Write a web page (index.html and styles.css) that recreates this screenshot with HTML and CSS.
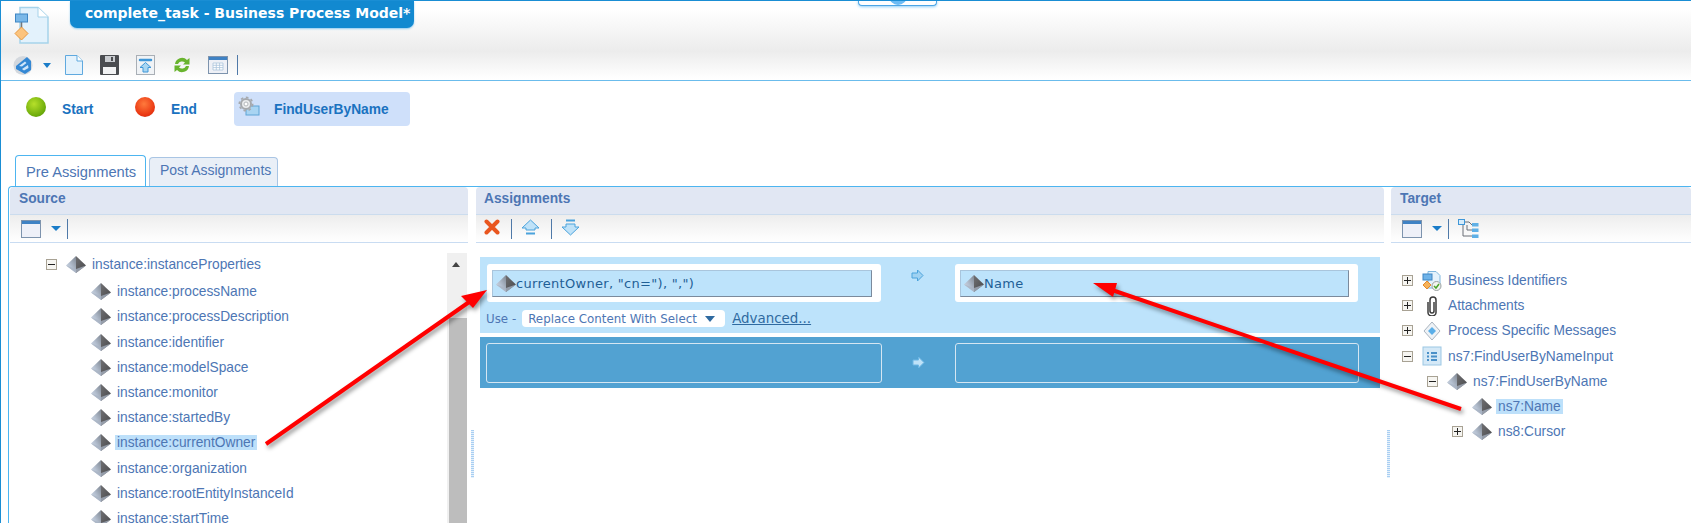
FILE: index.html
```html
<!DOCTYPE html>
<html lang="en">

<head>
    <meta charset="UTF-8">
    <title>complete_task - Business Process Model</title>
    <link rel="stylesheet" href="styles.css">
</head>

<body>
    <!-- shared icons -->
    <svg class="defs" width="0" height="0">
        <defs>
            <linearGradient id="g-pyr-l" x1="1" y1="0" x2="0" y2="1">
                <stop offset="0" stop-color="#7d8590"/>
                <stop offset=".55" stop-color="#b5c0d0"/>
                <stop offset="1" stop-color="#d5deea"/>
            </linearGradient>
            <linearGradient id="g-pyr-r" x1="0" y1="0" x2="1" y2="1">
                <stop offset="0" stop-color="#6f6f72"/>
                <stop offset="1" stop-color="#48484a"/>
            </linearGradient>
            <symbol id="pyramid" viewBox="0 0 20 17">
                <path d="M10 0 0 9.500 10 17Z" fill="url(#g-pyr-l)"/>
                <path d="M10 0 20 9.500 10 17Z" fill="url(#g-pyr-r)"/>
                <path d="M0 9.500 10 17 20 9.500 10 13Z" fill="#a8b3c3" opacity=".75"/>
            </symbol>
            <symbol id="window" viewBox="0 0 20 18">
                <rect x=".5" y=".5" width="19" height="17" fill="#eef0f8" stroke="#7d93ad"/>
                <rect x="1" y="1" width="18" height="3" fill="#3f82c4"/>
            </symbol>
        </defs>
    </svg>

    <div class="app">
        <header class="top">
            <div class="title-row">
                <svg class="doc-icon" width="36" height="39" viewBox="0 0 36 39">
                    <path d="M6 1.500H24L34 11V37H6Z" fill="#e3f2fc" stroke="#a6d3ea" stroke-width="1.500"/>
                    <path d="M24 1.500V11H34" fill="#fff" stroke="#a6d3ea"/>
                    <path d="M7.500 16V22" stroke="#777" stroke-width="1.500"/>
                    <rect x="1.500" y="8" width="12" height="8" fill="#7ab8e8" stroke="#3f86c4"/>
                    <path d="M7.500 21 14 27.500 7.500 34 1 27.500Z" fill="#fcc47e" stroke="#e8983e"/>
                </svg>
                <h1 class="title-tab">complete_task - Business Process Model*</h1>
            </div>
            <div class="toolbar main-tools">
                <svg width="20" height="21" viewBox="0 0 20 21">
                    <circle cx="10" cy="10.500" r="9.500" fill="#d3d8de"/>
                    <path d="M3 11 14 2 18 6V15L12 19 3 14Z" fill="#3488d4"/>
                    <path d="M6 11 12 6.500 13.500 8 9 11.500ZM9 14 15 10 15.500 13 11 15.500Z" fill="#cfe6fa"/>
                </svg>
                <span class="caret"></span>
                <svg class="t-page" width="18" height="20" viewBox="0 0 18 20">
                    <path d="M.5.5H12L17.500 6V19.500H.5Z" fill="#e4f2fc" stroke="#5fa9df"/>
                    <path d="M12 .5V6H17.500" fill="#fff" stroke="#5fa9df"/>
                </svg>
                <svg class="t-save" width="19" height="20" viewBox="0 0 19 20">
                    <rect width="19" height="20" rx="1" fill="#4a4c50"/>
                    <rect x="5" y="1" width="10" height="6" fill="#c9ccd0"/>
                    <rect x="11" y="2" width="2" height="4" fill="#4a4c50"/>
                    <rect x="3" y="12" width="13" height="7" fill="#f1f2f3"/>
                </svg>
                <svg class="t-publish" width="19" height="20" viewBox="0 0 19 20">
                    <rect x=".5" y=".5" width="18" height="19" fill="#f0f3f6" stroke="#a9afb6"/>
                    <path d="M4 5H15" stroke="#3f97d8" stroke-width="2.500" stroke-linecap="round"/>
                    <path d="M9.500 7.500 15 12.500H12V17H7V12.500H4Z" fill="#a8d6f2" stroke="#3f97d8"/>
                </svg>
                <svg class="t-refresh" width="18" height="18" viewBox="0 0 18 18">
                    <path d="M2 8A7 7 0 0 1 14 4L16.500 2V8.500H10L12 6.500A4.500 4.500 0 0 0 5 8Z" fill="#69b42e"/>
                    <path d="M16 10A7 7 0 0 1 4 14L1.500 16V9.500H8L6 11.500A4.500 4.500 0 0 0 13 10Z" fill="#69b42e"/>
                </svg>
                <svg class="t-cal" width="20" height="18" viewBox="0 0 20 18">
                    <rect x=".5" y=".5" width="19" height="17" fill="#eef0f6" stroke="#7d93ad"/>
                    <rect x="1" y="1" width="18" height="3" fill="#3f82c4"/>
                    <path d="M5 7H15V14H5ZM5 9.300H15M5 11.600H15M8.300 7V14M11.600 7V14" fill="#fff" stroke="#aac4dc" stroke-width=".8"/>
                </svg>
                <span class="tool-sep"></span>
            </div>
        </header>

        <div class="workspace">
            <nav class="palette">
                <div class="node node-start"><span class="ball ball-green"></span><span>Start</span></div>
                <div class="node node-end"><span class="ball ball-red"></span><span>End</span></div>
                <div class="node node-activity">
                    <svg class="gear" width="22" height="20" viewBox="0 0 22 20">
                        <rect x="8" y="10" width="13" height="9" fill="#a8d4f2" stroke="#5fa4d6"/>
                        <circle cx="8" cy="8" r="6.700" fill="none" stroke="#a6a9ad" stroke-width="1.600" stroke-dasharray="2.600 2.600"/>
                        <circle cx="8" cy="8" r="5" fill="#e9ebed" stroke="#a6a9ad" stroke-width="2"/>
                        <circle cx="8" cy="8" r="2" fill="#fff" stroke="#b5b8bc"/>
                    </svg>
                    <span>FindUserByName</span>
                </div>
            </nav>

            <div class="tabs">
                <div class="tab tab-active">Pre Assignments</div>
                <div class="tab">Post Assignments</div>
            </div>

            <div class="panels">
                <section class="panel panel-source">
                    <h2 class="panel-head">Source</h2>
                    <div class="toolbar panel-tools">
                        <svg width="20" height="18"><use href="#window"/></svg>
                        <span class="caret"></span>
                        <span class="tool-sep"></span>
                    </div>
                    <div class="source-body">
                        <ul class="tree source-tree">
                            <li class="row"><span class="toggle minus"></span><svg class="pyr"><use href="#pyramid"/></svg><span class="label">instance:instanceProperties</span></li>
                            <li class="row lvl-1"><span class="toggle none"></span><svg class="pyr"><use href="#pyramid"/></svg><span class="label">instance:processName</span></li>
                            <li class="row lvl-1"><span class="toggle none"></span><svg class="pyr"><use href="#pyramid"/></svg><span class="label">instance:processDescription</span></li>
                            <li class="row lvl-1"><span class="toggle none"></span><svg class="pyr"><use href="#pyramid"/></svg><span class="label">instance:identifier</span></li>
                            <li class="row lvl-1"><span class="toggle none"></span><svg class="pyr"><use href="#pyramid"/></svg><span class="label">instance:modelSpace</span></li>
                            <li class="row lvl-1"><span class="toggle none"></span><svg class="pyr"><use href="#pyramid"/></svg><span class="label">instance:monitor</span></li>
                            <li class="row lvl-1"><span class="toggle none"></span><svg class="pyr"><use href="#pyramid"/></svg><span class="label">instance:startedBy</span></li>
                            <li class="row lvl-1"><span class="toggle none"></span><svg class="pyr"><use href="#pyramid"/></svg><span class="label selected">instance:currentOwner</span></li>
                            <li class="row lvl-1"><span class="toggle none"></span><svg class="pyr"><use href="#pyramid"/></svg><span class="label">instance:organization</span></li>
                            <li class="row lvl-1"><span class="toggle none"></span><svg class="pyr"><use href="#pyramid"/></svg><span class="label">instance:rootEntityInstanceId</span></li>
                            <li class="row lvl-1"><span class="toggle none"></span><svg class="pyr"><use href="#pyramid"/></svg><span class="label">instance:startTime</span></li>
                        </ul>
                        <div class="scrollbar">
                            <div class="scroll-up"></div>
                            <div class="scroll-thumb"></div>
                        </div>
                    </div>
                </section>

                <div class="splitter"><span class="grip"></span></div>

                <section class="panel panel-assign">
                    <h2 class="panel-head">Assignments</h2>
                    <div class="toolbar panel-tools assign-tools">
                        <svg width="16" height="16" viewBox="0 0 16 16">
                            <path d="M2.500 2.500 13.500 13.500M13.500 2.500 2.500 13.500" stroke="#e9561f" stroke-width="4" stroke-linecap="round"/>
                        </svg>
                        <span class="tool-sep"></span>
                        <svg width="19" height="17" viewBox="0 0 19 17">
                            <path d="M9.500 1 18 9H14V11H5V9H1Z" fill="#bfe2f8" stroke="#4ba3dc"/>
                            <path d="M5 14.500H14" stroke="#4ba3dc" stroke-width="2"/>
                        </svg>
                        <span class="tool-sep"></span>
                        <svg width="19" height="17" viewBox="0 0 19 17">
                            <path d="M5 1.500H14" stroke="#4ba3dc" stroke-width="2"/>
                            <path d="M9.500 16 18 8H14V5H5V8H1Z" fill="#bfe2f8" stroke="#4ba3dc"/>
                        </svg>
                    </div>
                    <div class="assign-list">
                        <div class="assign-row assign-on">
                            <div class="assign-fields">
                                <div class="field-box">
                                    <div class="field-inner"><svg class="pyr"><use href="#pyramid"/></svg><span>currentOwner, "cn="), ",")</span></div>
                                </div>
                                <svg class="arrow-r" width="13" height="13" viewBox="0 0 13 13">
                                    <path d="M1 4H6.500V1L12 6.500 6.500 12V9H1Z" fill="#9fd2f2" stroke="#4ba3dc"/>
                                </svg>
                                <div class="field-box box-right">
                                    <div class="field-inner"><svg class="pyr"><use href="#pyramid"/></svg><span>Name</span></div>
                                </div>
                            </div>
                            <div class="use-line">
                                <span>Use -</span>
                                <span class="use-select">Replace Content With Select<span class="select-caret"></span></span>
                                <a class="use-link" href="#">Advanced...</a>
                            </div>
                        </div>
                        <div class="assign-row assign-off">
                            <div class="empty-box"></div>
                            <svg class="arrow-r arrow-off" width="13" height="13" viewBox="0 0 13 13">
                                <path d="M1 4H6.500V1L12 6.500 6.500 12V9H1Z" fill="#bfe2f8" stroke="#6cb6e4"/>
                            </svg>
                            <div class="empty-box box-right"></div>
                        </div>
                    </div>
                </section>

                <div class="splitter"><span class="grip"></span></div>

                <section class="panel panel-target">
                    <h2 class="panel-head">Target</h2>
                    <div class="toolbar panel-tools">
                        <svg width="20" height="18"><use href="#window"/></svg>
                        <span class="caret"></span>
                        <span class="tool-sep"></span>
                        <svg class="tree-tool" width="21" height="20" viewBox="0 0 21 20">
                            <path d="M5 6V17H14M9 11H14M9 6V11M6 3H11L14 6" fill="none" stroke="#6a6f76"/>
                            <rect x=".5" y=".5" width="6" height="5" fill="#d6ecfb" stroke="#3f97d8"/>
                            <rect x="14" y="4" width="6.500" height="3.500" fill="#5fb0e6"/>
                            <rect x="14" y="9.500" width="6.500" height="3.500" fill="#5fb0e6"/>
                            <rect x="14" y="15.500" width="6.500" height="3.500" fill="#5fb0e6"/>
                        </svg>
                    </div>
                    <ul class="tree target-tree">
                        <li class="row"><span class="toggle plus"></span>
                            <svg class="pyr" viewBox="0 0 20 20">
                                <path d="M6 .5H14L18 4.500V17H6Z" fill="#e4f2fc" stroke="#7fb7de"/>
                                <rect x="1" y="3" width="9" height="6" fill="#6fb3e8" stroke="#3f86c4"/>
                                <path d="M5 10 9 14 5 18 1 14Z" fill="#f6b25a" stroke="#e38a2e"/>
                                <circle cx="14.500" cy="15" r="4.500" fill="#f2f4f0" stroke="#9aa0a0"/>
                                <path d="M12 15 14 17 17 13" fill="none" stroke="#4aa52a" stroke-width="1.500"/>
                            </svg>
                            <span class="label">Business Identifiers</span></li>
                        <li class="row"><span class="toggle plus"></span>
                            <svg class="pyr" viewBox="0 0 20 20">
                                <path d="M6 6V16.500A4 3.500 0 0 0 14 16.500V4A3 3 0 0 0 8 4V15A2 2 0 0 0 12 15V6" fill="none" stroke="#3c3c3c" stroke-width="1.500"/>
                            </svg>
                            <span class="label">Attachments</span></li>
                        <li class="row"><span class="toggle plus"></span>
                            <svg class="pyr" viewBox="0 0 20 20">
                                <path d="M10 1 18 10 10 19 2 10Z" fill="#eef2f6" stroke="#a9b4bf"/>
                                <path d="M10 6 14 10 10 14 6 10Z" fill="#5aaee8"/>
                            </svg>
                            <span class="label">Process Specific Messages</span></li>
                        <li class="row"><span class="toggle minus"></span>
                            <svg class="pyr" viewBox="0 0 20 20">
                                <rect x="1" y="1" width="18" height="18" fill="#d5e9f7" stroke="#9cc7e4"/>
                                <path d="M5 6H7V8H5ZM9 6H15V8H9ZM5 9.500H7V11.500H5ZM9 9.500H15V11.500H9ZM5 13H7V15H5ZM9 13H15V15H9Z" fill="#4a90c8"/>
                            </svg>
                            <span class="label">ns7:FindUserByNameInput</span></li>
                        <li class="row lvl-1"><span class="toggle minus"></span><svg class="pyr"><use href="#pyramid"/></svg><span class="label">ns7:FindUserByName</span></li>
                        <li class="row lvl-2"><span class="toggle none"></span><svg class="pyr"><use href="#pyramid"/></svg><span class="label selected">ns7:Name</span></li>
                        <li class="row lvl-2"><span class="toggle plus"></span><svg class="pyr"><use href="#pyramid"/></svg><span class="label">ns8:Cursor</span></li>
                    </ul>
                </section>
            </div>
        </div>

        <!-- tab of the collapsed banner, top centre -->
        <div class="banner-handle"><span class="banner-dot"></span></div>

        <!-- annotation arrows drawn over the screenshot -->
        <svg class="callouts" width="1691" height="523" viewBox="0 0 1691 523">
            <path d="M266 444 472 300" stroke="#f00" stroke-width="4"/>
            <path d="M487 290 473 308 461 296Z" fill="#f00"/>
            <path d="M1461 409 1112 290" stroke="#f00" stroke-width="4"/>
            <path d="M1093 283 1117 283 1113 297Z" fill="#f00"/>
        </svg>
    </div>
</body>

</html>
```

FILE: styles.css
```css
* {
    box-sizing: border-box;
}

html,
body {
    margin: 0;
    height: 523px;
    overflow: hidden;
    background-color: #fff;
}

body {
    font-family: "Liberation Sans", Arial, sans-serif;
    font-size: 13.75px;
    color: #4d76b4;
}

ul {
    list-style: none;
    margin: 0;
    padding: 0;
}

.defs {
    position: absolute;
}

.app {
    height: 523px;
    border-top: 1px solid #1a8ed4;
    border-left: 1px solid #1a8ed4;
    position: relative;
    overflow: hidden;
}

/* header */
.top {
    height: 80px;
    background: linear-gradient(#fff 8px, #ececec 50px, #fff 78px);
    border-bottom: 1px solid #6bbcec;
}

.title-row {
    display: flex;
    height: 50px;
}

.doc-icon {
    margin: 5px 0 0 13px;
}

.title-tab {
    margin: 0 0 0 20px;
    width: 344px;
    height: 27px;
    padding-left: 15px;
    line-height: 25px;
    font-family: "DejaVu Sans", Verdana, sans-serif;
    font-size: 14px;
    font-weight: bold;
    color: #fff;
    background-color: #1289d0;
    border-radius: 0 0 7px 7px;
    box-shadow: 0 1px 2px #8fcbf0;
}

.toolbar {
    display: flex;
    align-items: center;
}

.main-tools {
    padding-left: 12px;
    height: 28px;
}

.caret {
    width: 0;
    height: 0;
    margin-left: 10px;
    border-left: 4.5px solid transparent;
    border-right: 4.5px solid transparent;
    border-top: 5px solid #1a7cc8;
}

.t-page {
    margin-left: 14px;
}

.t-save,
.t-publish {
    margin-left: 17px;
}

.t-refresh {
    margin-left: 18px;
}

.t-cal {
    margin-left: 17px;
}

.tool-sep {
    width: 1px;
    height: 20px;
    background-color: #4f79a8;
    margin-left: 9px;
}

.workspace {
    background-color: #fff;
}

/* process nodes */
.palette {
    display: flex;
    align-items: center;
    height: 34px;
    margin-top: 11px;
    font-weight: bold;
    color: #1a72c0;
}

.node {
    display: flex;
    align-items: center;
}

.node-start {
    margin-left: 25px;
    width: 109px;
    gap: 16px;
}

.node-end {
    width: 99px;
    gap: 16px;
}

.node-activity {
    width: 176px;
    height: 34px;
    padding-left: 4px;
    gap: 14px;
    background-color: #cfe0fa;
    border-radius: 4px;
}

.gear {
    margin-top: -6px;
}

.ball {
    width: 20px;
    height: 20px;
    border-radius: 50%;
    margin-top: -4px;
}

.ball-green {
    background: radial-gradient(circle at 40% 35%, #b6e02a, #6aa90a 70%, #4f7f12);
}

.ball-red {
    background: radial-gradient(circle at 45% 35%, #ff7a3c, #e8320f 70%, #6d5a55);
}

/* tabs */
.tabs {
    display: flex;
    align-items: flex-end;
    gap: 3px;
    height: 60px;
    padding-left: 14px;
    font-size: 14px;
}

.tab {
    width: 129px;
    height: 29px;
    padding: 4px 0 0 10px;
    background-color: #e9eff7;
    border: 1px solid #a9c5e4;
    border-bottom: none;
    border-radius: 4px 4px 0 0;
}

.tab-active {
    width: 131px;
    height: 31px;
    padding: 8px 0 0 10px;
    font-size: 14.7px;
    background-color: #fff;
    border-color: #4db5f0;
}

/* panels */
.panels {
    display: flex;
    height: 340px;
    margin-left: 7px;
    padding-left: 1px;
    border-top: 1px solid #4db5f0;
    border-left: 1px solid #4db5f0;
    border-top-left-radius: 4px;
}

.panel {
    display: flex;
    flex-direction: column;
    min-width: 0;
}

.panel-source {
    width: 458px;
}

.panel-assign {
    width: 908px;
}

.panel-target {
    width: 300px;
}

.panel-head {
    margin: 0;
    height: 28px;
    padding-left: 9px;
    line-height: 24px;
    font-size: 13.75px;
    font-weight: bold;
    color: #4d76b4;
    background-color: #e1e7f3;
    border-bottom: 1px solid #cbdcee;
    border-radius: 4px 4px 0 0;
}

.panel-assign .panel-head {
    padding-left: 8px;
}

.panel-tools {
    height: 28px;
    flex: none;
    padding-left: 11px;
    background: linear-gradient(#ededed, #fff);
    border-bottom: 1px solid #c9dcf2;
}

.panel-tools .caret {
    margin-left: 10px;
    border-left-width: 5px;
    border-right-width: 5px;
}

.panel-tools .tool-sep {
    margin-left: 6px;
}

.tree-tool {
    margin-left: 9px;
}

.assign-tools {
    padding-left: 8px;
}

.assign-tools svg {
    margin-bottom: 3px;
}

.assign-tools .tool-sep {
    margin: 0 9px 0 11px;
}

.splitter {
    flex: none;
    width: 8px;
    padding-top: 243px;
    display: flex;
    justify-content: center;
}

.splitter + .panel-target {
    margin-left: -1px;
}

.grip {
    width: 3px;
    height: 48px;
    background: repeating-linear-gradient(#a9cff2 0 1px, #e6f1fc 1px 2px);
}

/* trees */
.source-body {
    display: flex;
    flex: 1;
    min-height: 0;
    padding-top: 10px;
}

.tree {
    flex: 1;
    padding-left: 36px;
    overflow: hidden;
}

.source-tree {
    margin-top: -1px;
}

.source-tree .row:first-child {
    margin-bottom: 2px;
}

.target-tree {
    padding: 25px 0 0 11px;
}

.row {
    display: flex;
    align-items: center;
    height: 25.2px;
    white-space: nowrap;
}

.lvl-1 {
    padding-left: 25px;
}

.lvl-2 {
    padding-left: 50px;
}

.toggle {
    width: 11px;
    height: 11px;
    flex: none;
    margin-right: 9px;
    border: 1px solid #a8a294;
    background:
        linear-gradient(#222, #222) center / 7px 1px no-repeat,
        #f6f5f1;
}

.plus {
    background:
        linear-gradient(#222, #222) center / 7px 1px no-repeat,
        linear-gradient(#222, #222) center / 1px 7px no-repeat,
        #f6f5f1;
}

.none {
    visibility: hidden;
}

.pyr {
    width: 20px;
    height: 17px;
    flex: none;
}

.target-tree svg[viewBox] {
    height: 20px;
}

.label {
    margin-left: 6px;
}

.selected {
    margin-left: 4px;
    padding: 0 2px;
    background-color: #bde0fa;
}

.scrollbar {
    display: flex;
    flex-direction: column;
    width: 20px;
    margin-right: 1px;
    background-color: #f0f0f0;
}

.scroll-up {
    height: 65px;
    position: relative;
}

.scroll-up::before {
    content: "";
    position: absolute;
    left: 5px;
    top: 9px;
    border-left: 4px solid transparent;
    border-right: 4px solid transparent;
    border-bottom: 5px solid #444;
}

.scroll-thumb {
    flex: 1;
    margin-left: 2px;
    background-color: #bdbdbd;
}

/* assignment rows */
.assign-list {
    padding: 14px 0 0 4px;
}

.assign-row {
    width: 900px;
    font-family: "DejaVu Sans", Verdana, sans-serif;
    font-size: 11.85px;
}

.assign-on {
    height: 76px;
    padding: 7px 0 0 7px;
    background-color: #bde3fb;
}

.assign-fields {
    display: flex;
    align-items: flex-start;
}

.field-box {
    width: 394px;
    height: 38px;
    padding: 6px 9px 5px 5px;
    background-color: #fff;
    border-radius: 3px;
}

.box-right {
    width: 403px;
    margin-left: 0;
}

.field-inner {
    display: flex;
    align-items: center;
    height: 27px;
    padding-left: 3px;
    font-size: 13px;
    letter-spacing: .3px;
    color: #1f5f96;
    background-color: #bde3fb;
    border: 1px solid #a9c5dc;
    border-right-color: #7b8a9c;
    border-bottom-color: #7b8a9c;
}

.arrow-r {
    flex: none;
    margin: 5px 31px 0 30px;
}

.use-line {
    display: flex;
    align-items: center;
    height: 17px;
    margin-top: 8px;
    gap: 7px;
    margin-left: -1px;
}

.use-select {
    display: flex;
    align-items: center;
    justify-content: space-between;
    width: 203px;
    height: 17px;
    margin-left: -1px;
    padding: 0 10px 0 6px;
    background-color: #fff;
    border-radius: 4px;
}

.select-caret {
    border-left: 5px solid transparent;
    border-right: 5px solid transparent;
    border-top: 6px solid #2f6aa0;
}

.use-link {
    font-size: 13.4px;
    color: #2f6aa0;
}

.assign-off {
    display: flex;
    align-items: center;
    height: 51px;
    margin-top: 4px;
    padding-left: 6px;
    background-color: #52a2d2;
}

.empty-box {
    width: 396px;
    height: 40px;
    border: 1px solid #d5e6f2;
    border-radius: 3px;
}

.empty-box.box-right {
    width: 404px;
}

.arrow-off {
    margin: 0 30px 0 30px;
}

/* small handle at the top of the page */
.banner-handle {
    position: absolute;
    top: -1px;
    left: 857px;
    width: 79px;
    height: 6px;
    overflow: hidden;
    background-color: #fff;
    border: 1px solid #4da6e6;
    border-top: none;
    border-radius: 0 0 4px 4px;
    box-shadow: 0 1px 3px #8fd0f8;
}

.banner-dot {
    display: block;
    width: 18px;
    height: 18px;
    margin: -13px auto 0;
    border-radius: 50%;
    background-color: #6cbcf5;
}

.callouts {
    position: absolute;
    top: -1px;
    left: -1px;
    filter: drop-shadow(2px 3px 2px rgba(0, 0, 0, .4));
}
```
